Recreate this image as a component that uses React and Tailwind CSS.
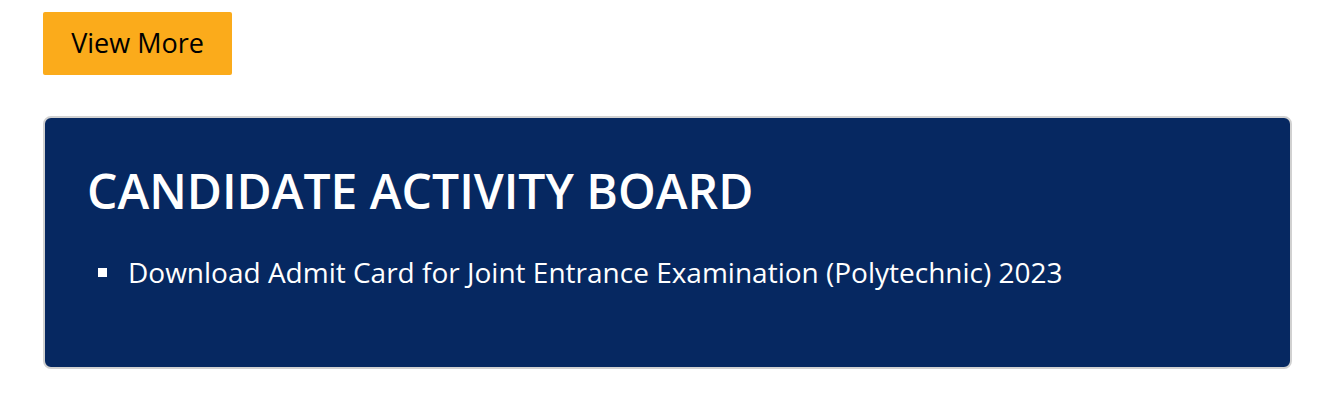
export default function App() {
  return (
    <div className="w-[1322px] h-[406px] bg-white pt-3 px-[43px]" style={{ fontFamily: '"Open Sans", sans-serif' }}>
      <button className="w-[189px] h-[63px] bg-[#fbab1b] text-black text-[27px] rounded-[2px] flex items-center justify-center">
        View More
      </button>
      <div className="mt-[41px] w-[1249px] h-[253px] bg-[#062861] border-2 border-[#d1d1d1] rounded-[8px] pl-[42px] pt-[49px]">
        <h2 className="text-white text-[48px] font-semibold leading-[48px]">CANDIDATE ACTIVITY BOARD</h2>
        <ul className="mt-[43px] pl-[11px]">
          <li className="flex items-center text-white text-[28px] leading-[28px]">
            <span className="w-[9px] h-[9px] bg-white mr-[21px] shrink-0"></span>
            Download Admit Card for Joint Entrance Examination (Polytechnic) 2023
          </li>
        </ul>
      </div>
    </div>
  );
}
